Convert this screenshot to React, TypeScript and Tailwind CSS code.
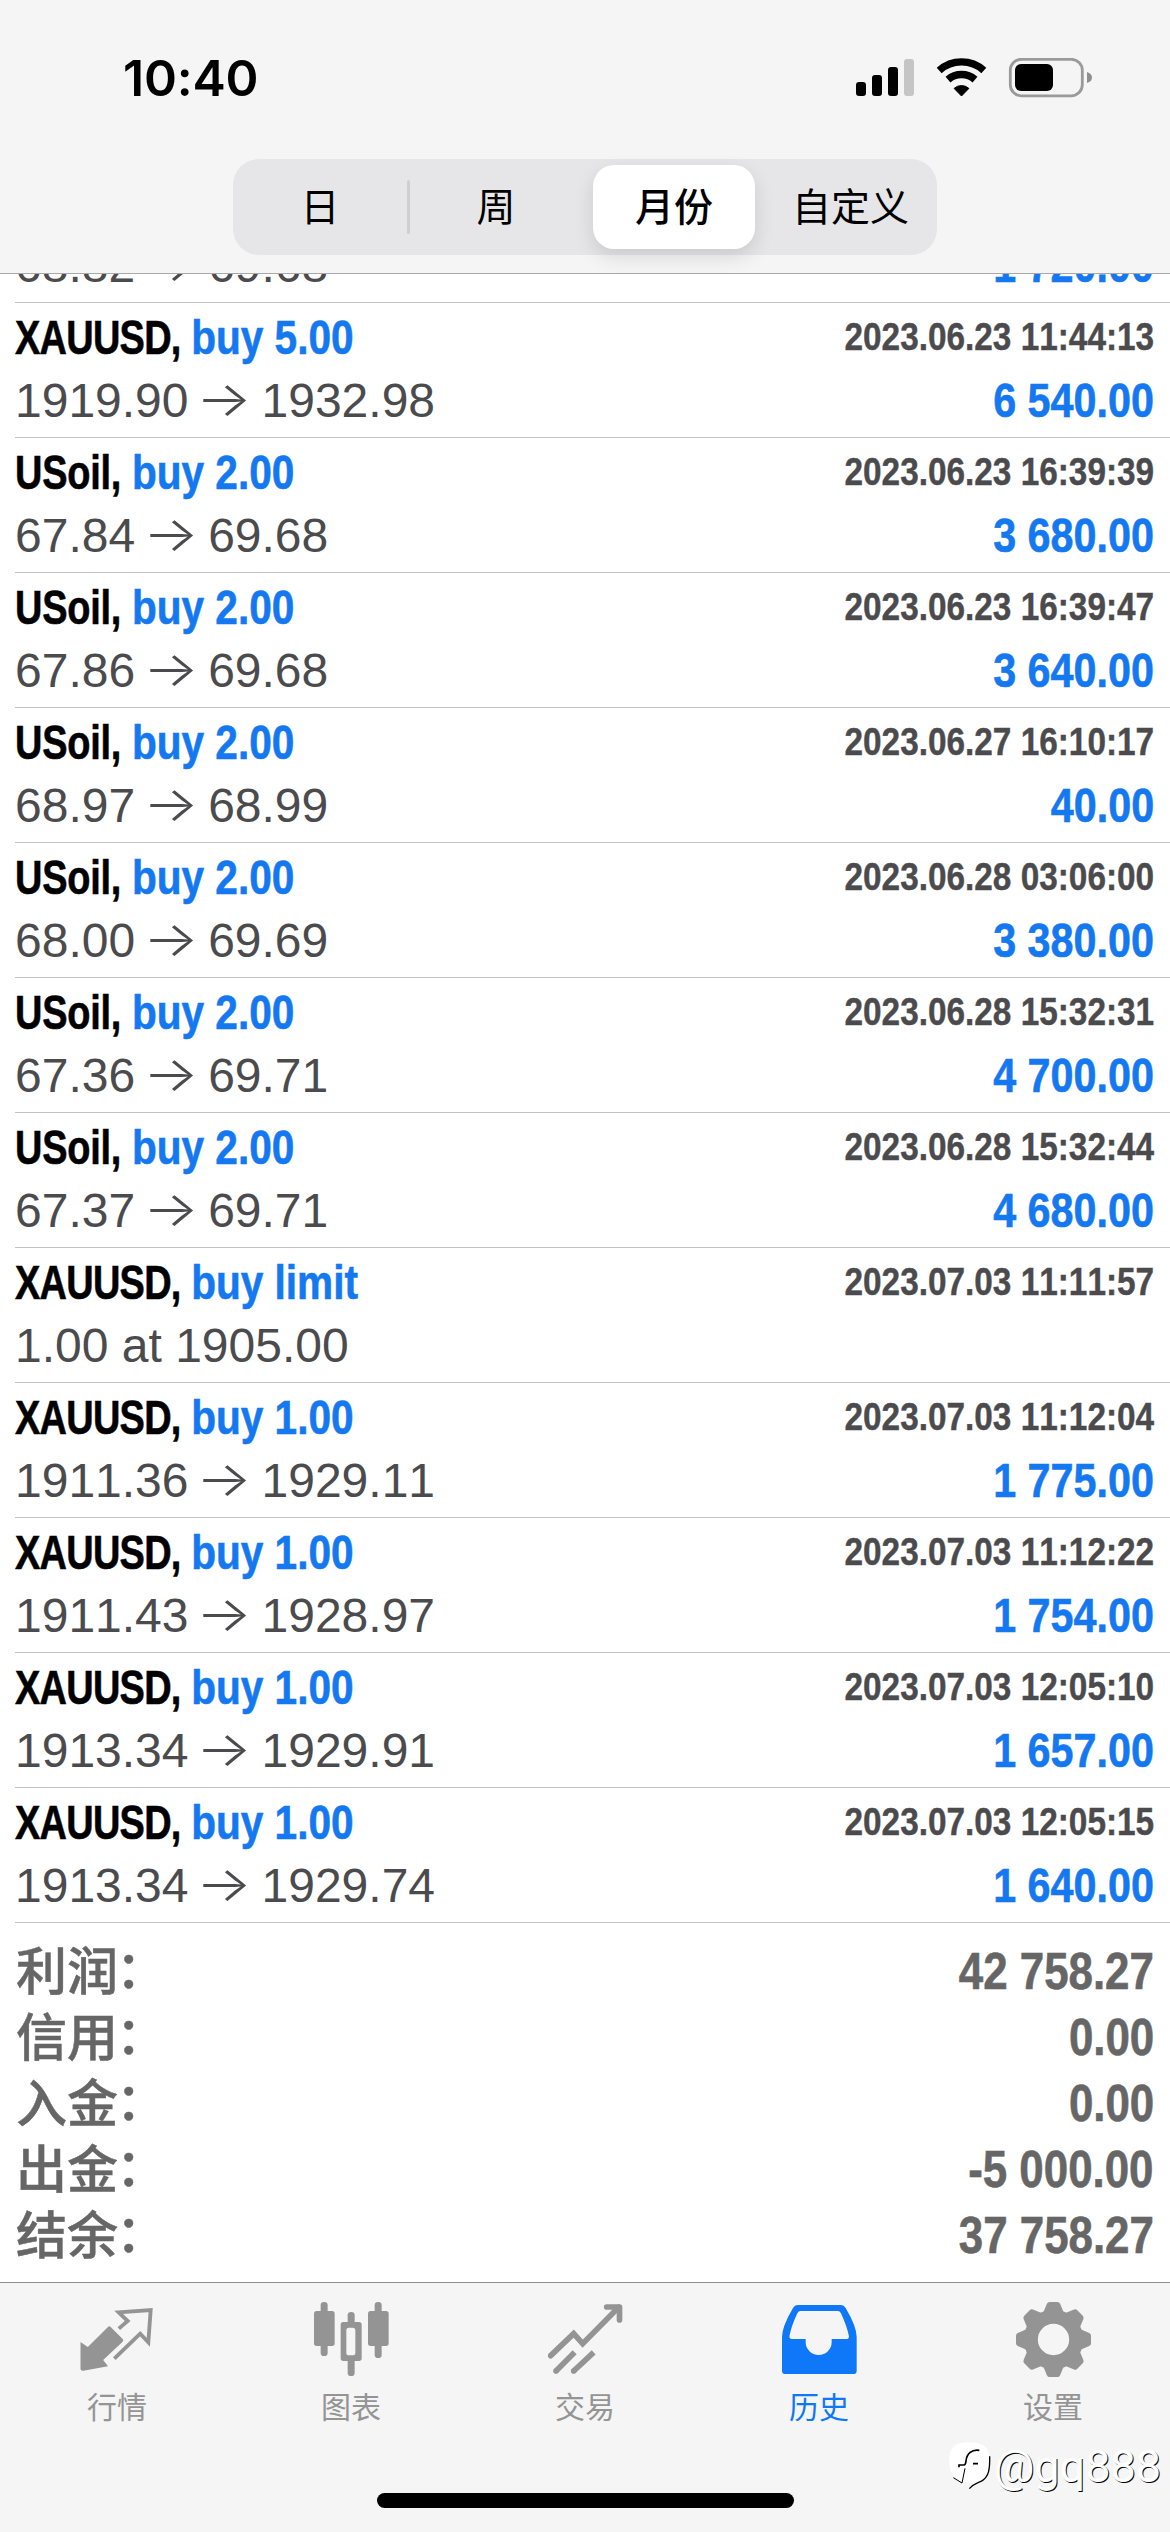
import React from "react";

interface Deal {
  symbol: string;
  action: string;
  open?: string;
  close?: string;
  note?: string;
  time: string;
  profit?: string;
}

const deals: Deal[] = [
  { symbol: "XAUUSD", action: "buy 5.00", open: "1919.90", close: "1932.98", time: "2023.06.23 11:44:13", profit: "6 540.00" },
  { symbol: "USoil", action: "buy 2.00", open: "67.84", close: "69.68", time: "2023.06.23 16:39:39", profit: "3 680.00" },
  { symbol: "USoil", action: "buy 2.00", open: "67.86", close: "69.68", time: "2023.06.23 16:39:47", profit: "3 640.00" },
  { symbol: "USoil", action: "buy 2.00", open: "68.97", close: "68.99", time: "2023.06.27 16:10:17", profit: "40.00" },
  { symbol: "USoil", action: "buy 2.00", open: "68.00", close: "69.69", time: "2023.06.28 03:06:00", profit: "3 380.00" },
  { symbol: "USoil", action: "buy 2.00", open: "67.36", close: "69.71", time: "2023.06.28 15:32:31", profit: "4 700.00" },
  { symbol: "USoil", action: "buy 2.00", open: "67.37", close: "69.71", time: "2023.06.28 15:32:44", profit: "4 680.00" },
  { symbol: "XAUUSD", action: "buy limit", note: "1.00 at 1905.00", time: "2023.07.03 11:11:57" },
  { symbol: "XAUUSD", action: "buy 1.00", open: "1911.36", close: "1929.11", time: "2023.07.03 11:12:04", profit: "1 775.00" },
  { symbol: "XAUUSD", action: "buy 1.00", open: "1911.43", close: "1928.97", time: "2023.07.03 11:12:22", profit: "1 754.00" },
  { symbol: "XAUUSD", action: "buy 1.00", open: "1913.34", close: "1929.91", time: "2023.07.03 12:05:10", profit: "1 657.00" },
  { symbol: "XAUUSD", action: "buy 1.00", open: "1913.34", close: "1929.74", time: "2023.07.03 12:05:15", profit: "1 640.00" },
];

const totals = [
  { label: "利润", value: "42 758.27" },
  { label: "信用", value: "0.00" },
  { label: "入金", value: "0.00" },
  { label: "出金", value: "-5 000.00" },
  { label: "结余", value: "37 758.27" },
];

function StatusIcons() {
  return (
    <svg className="h-[40px] w-[236px]" viewBox="856 58 236 40">
      <rect x="856" y="82" width="10" height="14" rx="3" />
      <rect x="872" y="75" width="10" height="21" rx="3" />
      <rect x="888" y="67" width="10" height="29" rx="3" />
      <rect x="904" y="59" width="10" height="37" rx="3" fill="#c5c5c6" />
      <path d="M961.5 96l-7.4-7.6a11 11 0 0 1 14.8 0z" stroke="#000" strokeWidth="1" strokeLinejoin="round" />
      <path d="M948 79.6a20.5 20.5 0 0 1 27 0" fill="none" stroke="#000" strokeWidth="7.4" />
      <path d="M939.2 70.4a33.5 33.5 0 0 1 44.6 0" fill="none" stroke="#000" strokeWidth="7.4" />
      <rect x="1010.3" y="59.3" width="72" height="36.5" rx="11" fill="none" stroke="#9a9a9b" strokeWidth="2.8" />
      <rect x="1015" y="64" width="38" height="27" rx="6" />
      <path d="M1087 72q5 1.5 5 5.5t-5 5.5z" fill="#8f8f90" />
    </svg>
  );
}

function QuotesIcon() {
  return (
    <svg className="h-[75px] w-[75px]" viewBox="0 0 225 225">
      <path d="M1.5 120L23.5 135L84 75q4-4 8 0L128 111q4 4 0 8L69.5 174L84 193L10 206q-9 1-8.5-8z" fill="currentColor" />
      <path d="M116.500 80L143 57L116 31L212 24L205 121L180.500 95L103 170" fill="none" stroke="currentColor" strokeWidth="11.500" strokeMiterlimit="6" />
    </svg>
  );
}

function ChartIcon() {
  return (
    <svg className="h-[75px] w-[75px]" viewBox="0 0 225 225" fill="currentColor">
      <rect x="0" y="27" width="62" height="105" rx="8" />
      <rect x="20" y="0" width="21" height="162" rx="10" />
      <rect x="101" y="30" width="21" height="40" rx="10" />
      <rect x="101" y="165" width="21" height="57" rx="10" />
      <path fillRule="evenodd" d="M88 60h47q8 0 8 8v101q0 8-8 8H88q-8 0-8-8V68q0-8 8-8zM105 77q-8 0-8 8v67q0 8 8 8h11q8 0 8-8V85q0-8-8-8z" />
      <rect x="162" y="27" width="62" height="105" rx="8" />
      <rect x="182" y="0" width="21" height="168" rx="10" />
    </svg>
  );
}

function TradeIcon() {
  return (
    <svg className="h-[75px] w-[75px]" viewBox="0 0 225 225" fill="none" stroke="currentColor" strokeWidth="17">
      <path d="M8 161L77 95L104 125L212 16" strokeLinecap="round" />
      <path d="M176 15H214.500V54" strokeLinecap="round" strokeLinejoin="round" />
      <path d="M24 207L80 151M77 207L137 151" />
      <path d="M24 207h.01M77 207h.01" strokeLinecap="round" />
    </svg>
  );
}

function HistoryIcon() {
  return (
    <svg className="h-[75px] w-[75px]" viewBox="0 0 225 225" fill="currentColor">
      <path
        fillRule="evenodd"
        d="M47 9H177Q186 9 191 18Q224 74 224 105V206Q224 216 214 216H10Q0 216 0 206V105Q0 74 33 18Q38 9 47 9ZM56 27Q49 27 46 34Q29 70 23 99Q20 111 30 111H71V120A39 39 0 0 0 149 120V111H194Q203 111 200 99Q195 74 177 34Q174 27 167 27Z"
      />
    </svg>
  );
}

function SettingsIcon() {
  return (
    <svg className="h-[75px] w-[75px]" viewBox="0 0 225 225" fill="currentColor">
      <g stroke="currentColor" strokeWidth="18" strokeLinejoin="round">
        {[0, 45, 90, 135, 180, 225, 270, 315].map((angle) => (
          <path key={angle} d="M101 9H124L137 40L112.500 50L88 40Z" transform={`rotate(${angle} 112.500 112.500)`} />
        ))}
      </g>
      <circle cx="112.500" cy="112.500" r="68" fill="none" stroke="currentColor" strokeWidth="42" />
    </svg>
  );
}

const tabs = [
  { label: "行情", icon: QuotesIcon },
  { label: "图表", icon: ChartIcon },
  { label: "交易", icon: TradeIcon },
  { label: "历史", icon: HistoryIcon, active: true },
  { label: "设置", icon: SettingsIcon },
];

function DealPrices({ open, close, note, profit }: Partial<Deal>) {
  return (
    <div className="flex h-[62px] shrink-0 items-center justify-between">
      <div className="flex items-center text-[48px] text-[#4b4b4e]">
        {note ?? (
          <>
            {open}
            <span className="flex w-[73px] justify-center pb-[4px] pr-[2px] font-['Inter',sans-serif] font-light">
              <span className="scale-x-122">→</span>
            </span>
            {close}
          </>
        )}
      </div>
      <div className="origin-right scale-x-86 text-[48px] font-bold text-[#1478f0] [-webkit-text-stroke:0.6px_currentColor]">{profit}</div>
    </div>
  );
}

function DealRow({ deal }: { deal: Deal }) {
  const symbolTracking = deal.symbol === "USoil" ? "tracking-[-0.3px]" : "tracking-[-0.9px]";

  return (
    <div className="ml-[15px] h-[135px] shrink-0 border-b border-[#c2c2c4] pr-4 pt-[3px]">
      <div className="flex h-[64px] items-start justify-between pt-[8px]">
        <div className="origin-left scale-x-79 whitespace-pre text-[48px] font-bold text-black [-webkit-text-stroke:0.6px_currentColor]">
          <span className={symbolTracking}>{deal.symbol},</span>{" "}
          <span className="inline-block origin-left scale-x-107 text-[#1478f0]">{deal.action}</span>
        </div>
        <div className="mt-[3px] origin-right scale-x-[0.855] text-[39px] font-bold text-[#4b4b4e] [-webkit-text-stroke:0.4px_currentColor]">{deal.time}</div>
      </div>
      <DealPrices {...deal} />
    </div>
  );
}

export default function App() {
  return (
    <div className="relative flex h-[2532px] w-[1170px] flex-col overflow-hidden bg-white font-['Liberation_Sans',Arial,sans-serif] leading-none [font-kerning:none]">
      {/* Status bar and period switch */}
      <header className="flex h-[274px] shrink-0 flex-col border-b border-[#a9a9aa] bg-[#f5f5f6]">
        <div className="flex h-[159px] items-start justify-between pl-[123px] pr-[78px] pt-[58px]">
          <div className="font-['Inter',sans-serif] text-[50px] font-semibold leading-[40px] tracking-[-0.2px] text-black">10:40</div>
          <StatusIcons />
        </div>
        <div className="mx-auto flex h-24 w-[704px] items-center rounded-[26px] bg-[#e6e6e8] font-['Noto_Sans_CJK_SC',sans-serif] text-[39px] text-black">
          <div className="flex w-[174px] justify-center pb-[5px]">日</div>
          <div className="h-[54px] w-[3px] rounded-full bg-[#cfcfd1]" />
          <div className="flex w-[172px] justify-center pb-[5px]">周</div>
          <div className="ml-[11px] flex h-[84px] w-[162px] items-center justify-center rounded-[21px] bg-white pb-[5px] font-medium shadow-[0_8px_20px_rgba(0,0,0,0.12)]">
            月份
          </div>
          <div className="flex flex-1 justify-center pb-[5px] pl-[9px]">自定义</div>
        </div>
      </header>

      {/* Deals */}
      <main className="flex flex-1 flex-col">
        <div className="ml-[15px] flex h-[29px] shrink-0 flex-col justify-end overflow-hidden border-b border-[#c2c2c4] pb-[5px] pr-4">
          <DealPrices open="68.82" close="69.68" profit="1 720.00" />
        </div>
        {deals.map((deal) => (
          <DealRow key={deal.time} deal={deal} />
        ))}

        <div className="px-4 pt-[15px] text-[#666667]">
          {totals.map((total) => (
            <div key={total.label} className="flex h-[66px] items-center justify-between">
              <span className="flex pb-[6px] font-['Noto_Sans_CJK_SC',sans-serif] text-[51px] font-medium [-webkit-text-stroke:0.5px_currentColor]">
                {total.label}
                <span className="-ml-[2px] -mt-[2px] mb-[2px]">：</span>
              </span>
              <span className="origin-right scale-x-86 text-[51px] font-bold [-webkit-text-stroke:0.6px_currentColor]">{total.value}</span>
            </div>
          ))}
        </div>
      </main>

      {/* Tab bar */}
      <nav className="flex h-[250px] shrink-0 flex-col border-t border-[#8e8e8f] bg-[#f5f5f5]">
        <div className="flex h-[210px]">
          {tabs.map(({ label, icon: Icon, active }) => (
            <div key={label} className={`flex flex-1 flex-col items-center pt-[19px] ${active ? "text-[#0f78f8]" : "text-[#949494]"}`}>
              <Icon />
              <span className="mt-[12px] font-['Noto_Sans_CJK_SC',sans-serif] text-[30px] leading-[32px]">{label}</span>
            </div>
          ))}
        </div>
        <div className="mx-auto h-[15px] w-[417px] rounded-full bg-black" />
      </nav>

      {/* Watermark */}
      <div className="absolute bottom-[41px] right-[9px] flex items-center">
        <svg className="h-[50px] w-[46px]" viewBox="18 46 138 150" fill="none" stroke="#000" strokeWidth="4">
          <path d="M82 50C42 50 22 62 22 106C22 140 34 160 62 168L86 172L82 190C96 180 112 174 126 164C140 152 142 130 142 106C142 62 122 50 82 50Z" fill="#fff" stroke="none" />
          <path d="M143 92C144 130 140 152 122 164C108 172 96 172 82 189" />
          <path d="M112 74C90 70 74 84 72 106Q71 118 66 118H51V125M93 114H108" strokeWidth="5" />
          <path d="M69 128L60 172L34 156" strokeWidth="3" />
        </svg>
        <span className="font-['Roboto',sans-serif] text-[45px] text-white [text-shadow:1px_1px_0_#000]">@gq888</span>
      </div>
    </div>
  );
}
